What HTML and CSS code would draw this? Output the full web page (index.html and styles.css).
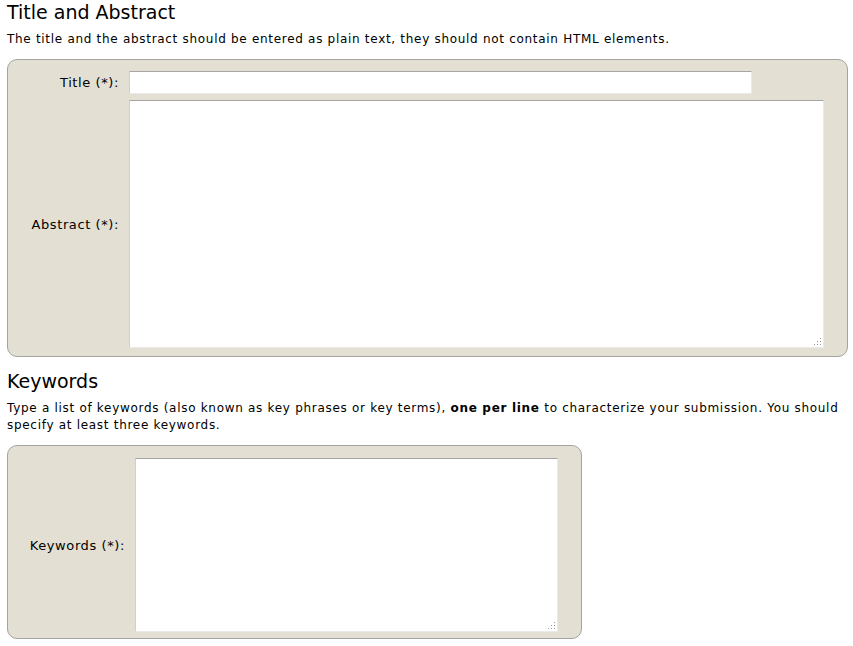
FILE: index.html
```html
<!DOCTYPE html>
<html>
<head>
<meta charset="utf-8">
<link rel="stylesheet" href="styles.css">
</head>
<body>
<div class="page">
  <h2 class="heading">Title and Abstract</h2>
  <p class="intro">The title and the abstract should be entered as plain text, they should not contain HTML elements.</p>
  <div class="box box-main">
    <label class="label" for="title">Title (*):</label>
    <div class="field"><input id="title" class="text-input" type="text"></div>
    <label class="label" for="abstract">Abstract (*):</label>
    <div class="field">
      <textarea id="abstract" class="area area-abstract"></textarea>
      <svg class="grip" width="9" height="9" viewBox="0 0 9 9"><rect x="7" y="1" width="1" height="1"/><rect x="4" y="4" width="1" height="1"/><rect x="7" y="4" width="1" height="1"/><rect x="1" y="7" width="1" height="1"/><rect x="4" y="7" width="1" height="1"/><rect x="7" y="7" width="1" height="1"/></svg>
    </div>
  </div>

  <h2 class="heading heading-second">Keywords</h2>
  <p class="intro intro-second">Type a list of keywords (also known as key phrases or key terms), <b>one per line</b> to characterize your submission. You should specify at least three keywords.</p>
  <div class="box box-keywords">
    <label class="label" for="keywords">Keywords (*):</label>
    <div class="field">
      <textarea id="keywords" class="area area-keywords"></textarea>
      <svg class="grip" width="9" height="9" viewBox="0 0 9 9"><rect x="7" y="1" width="1" height="1"/><rect x="4" y="4" width="1" height="1"/><rect x="7" y="4" width="1" height="1"/><rect x="1" y="7" width="1" height="1"/><rect x="4" y="7" width="1" height="1"/><rect x="7" y="7" width="1" height="1"/></svg>
    </div>
  </div>
</div>
</body>
</html>
```

FILE: styles.css
```css
html, body {
  margin: 0;
  padding: 0;
  background: #ffffff;
}

.page {
  padding: 0 6px 0 7px;
  font-family: "DejaVu Sans", Verdana, sans-serif;
  font-size: 12px;
  color: #000000;
}

.heading {
  margin: 0;
  font-size: 19px;
  line-height: 24px;
  font-weight: normal;
  color: #000000;
}

.heading-second {
  margin-top: 12px;
}

.intro {
  margin: 7px 0 11px 0;
  font-size: 12px;
  line-height: 17px;
  letter-spacing: 0.7px;
}

.intro-second {
  margin-bottom: 11px;
}

.box {
  box-sizing: border-box;
  background: #e3e0d3;
  border: 1px solid #a3a3a3;
  border-radius: 10px;
  display: grid;
  align-items: center;
}

.box-main {
  width: 841px;
  padding: 11px 23px 8px 0;
  grid-template-columns: 121px 1fr;
  row-gap: 6px;
}

.box-keywords {
  width: 575px;
  padding: 12px 23px 6px 0;
  grid-template-columns: 127px 1fr;
}

.label {
  text-align: right;
  padding-right: 10px;
  font-size: 13px;
  letter-spacing: 0.6px;
}

.field {
  display: flex;
  position: relative;
}

.text-input,
.area {
  box-sizing: border-box;
  margin: 0;
  background: #ffffff;
  border: 1px solid;
  border-color: #a5a5a5 #eaeaea #eaeaea #cfcfcf;
  font-family: "DejaVu Sans", Verdana, sans-serif;
  font-size: 12px;
  outline: none;
}

.text-input {
  width: 623px;
  height: 23px;
}

.area {
  display: block;
  resize: none;
}

.area-abstract {
  width: 695px;
  height: 248px;
}

.area-keywords {
  width: 423px;
  height: 174px;
}

.grip {
  position: absolute;
  bottom: 2px;
  fill: #9a9a9a;
}

.area-abstract + .grip {
  left: 684px;
}

.area-keywords + .grip {
  left: 412px;
}
```
